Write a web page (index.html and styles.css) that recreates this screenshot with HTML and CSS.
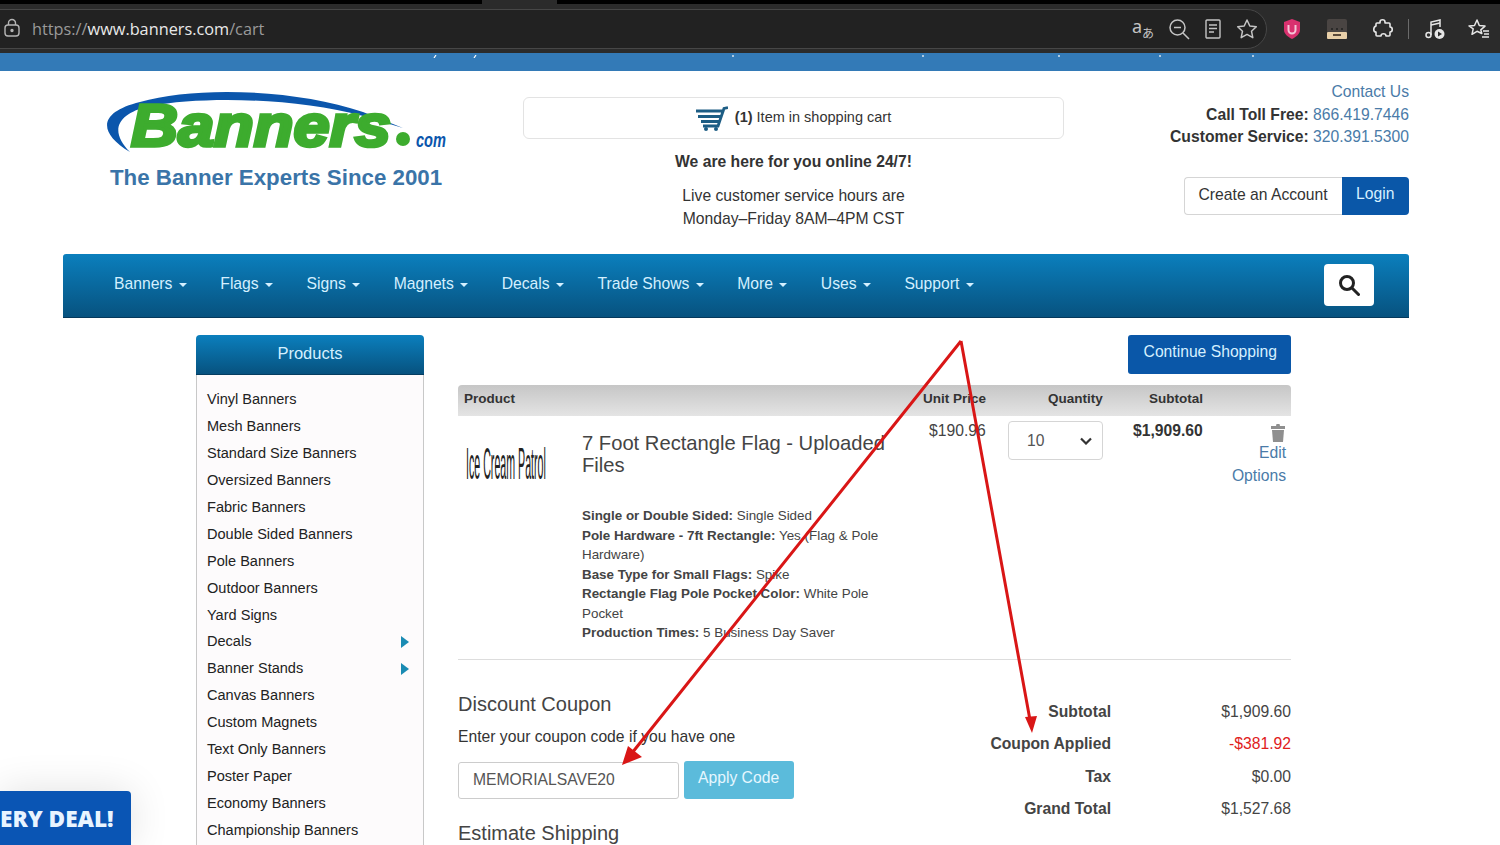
FILE: index.html
```html
<!DOCTYPE html>
<html lang="en">

<head>
  <meta charset="UTF-8" />
  <title>Banners.com - Cart</title>
  <link rel="stylesheet" href="styles.css">
</head>

<body>
  <div class="browserBar">
    <div class="addressBox">
      <svg class="lockIcon" width="18" height="20" viewBox="0 0 18 20" fill="none" stroke="#b5b5b5" stroke-width="1.4">
        <rect x="2" y="7" width="14" height="11" rx="3" />
        <path d="M5.5 7V5a3.500 3.500 0 0 1 7 0v2" />
        <circle cx="9" cy="12.500" r="1" fill="#b5b5b5" />
      </svg>
      <div class="urlText"><span class="urlDim">https://</span><span class="urlHost">www.banners.com</span><span class="urlDim">/cart</span></div>
      <div class="addressIcons">
        <svg class="transIcon" width="24" height="32" viewBox="0 -4 24 32">
          <text x="1" y="16" class="transLatin">a</text>
          <text x="11" y="21" class="transKana">あ</text>
        </svg>
        <svg width="24" height="24" viewBox="0 0 24 24" fill="none" stroke="#c4c4c4" stroke-width="1.5">
          <circle cx="10.500" cy="10.500" r="7.500" />
          <path d="M7 10.500h7M16 16l6 6" />
        </svg>
        <svg width="20" height="24" viewBox="0 0 20 24" fill="none" stroke="#c4c4c4" stroke-width="1.4">
          <rect x="3" y="3" width="14" height="18" rx="1" />
          <path d="M6 8h8M6 11.500h8M6 15h5" />
        </svg>
        <svg width="24" height="24" viewBox="0 0 24 24" fill="none" stroke="#c4c4c4" stroke-width="1.5">
          <path d="M12 3l2.800 6 6.500.8-4.800 4.400 1.300 6.500-5.800-3.300-5.800 3.300 1.300-6.500-4.800-4.400 6.500-.8z" stroke-linejoin="round" />
        </svg>
      </div>
    </div>
    <div class="toolIcons">
      <svg width="20" height="22" viewBox="0 0 20 22">
        <path d="M10 1l8 3v8c0 4-4 7-8 9-4-2-8-5-8-9V4z" fill="#d9316f" />
        <path d="M6.500 7v5a3.500 3.500 0 0 0 7 0V7" fill="none" stroke="#f5c6d8" stroke-width="2" />
      </svg>
      <svg width="22" height="22" viewBox="0 0 22 22">
        <rect x="1" y="1" width="20" height="14" rx="2" fill="#4a4543" />
        <rect x="1" y="14" width="20" height="7" rx="1" fill="#e8cfa8" />
        <rect x="7" y="16" width="8" height="2" fill="#5b4a3a" />
        <path d="M5 11h2M10 11h2M15 11h2" stroke="#222" stroke-width="1.500" />
      </svg>
      <svg width="22" height="22" viewBox="0 0 22 22" fill="none" stroke="#e6e6e6" stroke-width="1.600" stroke-linejoin="round">
        <path d="M8 4c0-3 5-3 5 0v1h4a1 1 0 0 1 1 1v3c3 0 3 5 0 5v3a1 1 0 0 1-1 1h-3c0-3-5-3-5 0H5a1 1 0 0 1-1-1v-3c-3 0-3-5 0-6V6a1 1 0 0 1 1-1h3z" />
      </svg>
      <span class="toolDivider"></span>
      <svg width="22" height="22" viewBox="0 0 22 22" fill="none" stroke="#e6e6e6" stroke-width="1.500">
        <circle cx="4.500" cy="17" r="2.500" />
        <path d="M7 17V4l9-2v7" />
        <path d="M7 7l9-2" />
        <circle cx="15.500" cy="16" r="5" fill="#e6e6e6" stroke="none" />
        <path d="M14 13.500l4 2.500-4 2.500z" fill="#2b2b2b" stroke="none" />
      </svg>
      <svg class="favIcon" width="24" height="24" viewBox="0 0 24 24" fill="none" stroke="#e6e6e6" stroke-width="1.500" stroke-linejoin="round">
        <path d="M10 3l2.300 5.500 5.700.6-4.200 3.800 1 3.600-4.800-2.200-5 3 1.200-5.400L2 9l5.500-.5z" />
        <path d="M16 14h6M17 17h5M15 20h7" />
      </svg>
    </div>
  </div>
  <div class="promoStrip">
    <svg width="1500" height="3" viewBox="0 0 1500 3" stroke="#fff" stroke-width="1.200">
      <path d="M436 0l-2 3M476 0l-2 3M733 0v2M923 0v2M1059 0v2M1160 0v2M1253 0v2" />
    </svg>
  </div>

  <div class="page">
    <header class="siteHeader">
      <div class="logoBlock">
        <svg class="logo" width="360" height="78" viewBox="0 -6 360 78">
          <path d="M25 60C-8 40 -6 20 35 10C90 -6 190 -3 258 20L298 36L258 24C190 6 100 4 45 14C10 22 5 40 25 60Z" fill="#0b56ac" />
          <text class="logoWord" x="26" y="54" textLength="260" lengthAdjust="spacingAndGlyphs">Banners</text>
          <circle cx="298" cy="47" r="7" fill="#3dac2e" />
          <text class="logoCom" x="311" y="55" textLength="30" lengthAdjust="spacingAndGlyphs">com</text>
        </svg>
        <div class="tagline">The Banner Experts Since 2001</div>
      </div>

      <div class="headerMiddle">
        <div class="cartBox">
          <svg width="32" height="25" viewBox="0 0 32 25" fill="none" stroke="#1d5d84" stroke-width="2.800">
            <path d="M0 5h27M2 10.500h23M5 15.500h18M7 20h15L28 2.500l4-1" />
            <circle cx="10" cy="23" r="2" fill="#1d5d84" stroke="none" />
            <circle cx="20" cy="23" r="2" fill="#1d5d84" stroke="none" />
          </svg>
          <span class="cartText"><b>(1)</b> Item in shopping cart</span>
        </div>
        <p class="onlineNote">We are here for you online 24/7!</p>
        <p class="hoursNote">Live customer service hours are<br />Monday–Friday 8AM–4PM CST</p>
      </div>

      <div class="headerRight">
        <a class="plainLink">Contact Us</a>
        <div class="phoneLine"><b>Call Toll Free:</b> <a class="plainLink">866.419.7446</a></div>
        <div class="phoneLine"><b>Customer Service:</b> <a class="plainLink">320.391.5300</a></div>
        <div class="accountBtns">
          <a class="btnCreate">Create an Account</a>
          <a class="btnLogin">Login</a>
        </div>
      </div>
    </header>

    <nav class="mainNav">
      <a>Banners <i class="caret"></i></a>
      <a>Flags <i class="caret"></i></a>
      <a>Signs <i class="caret"></i></a>
      <a>Magnets <i class="caret"></i></a>
      <a>Decals <i class="caret"></i></a>
      <a>Trade Shows <i class="caret"></i></a>
      <a>More <i class="caret"></i></a>
      <a>Uses <i class="caret"></i></a>
      <a>Support <i class="caret"></i></a>
      <button class="searchBtn">
        <svg width="22" height="22" viewBox="0 0 22 22" fill="none" stroke="#222" stroke-width="3">
          <circle cx="9" cy="9" r="6.500" />
          <path d="M14 14l6.500 6.500" stroke-linecap="round" />
        </svg>
      </button>
    </nav>

    <main class="mainArea">
      <aside class="sidebar">
        <h4 class="sidebarTitle">Products</h4>
        <ul class="sideList">
          <li>Vinyl Banners</li>
          <li>Mesh Banners</li>
          <li>Standard Size Banners</li>
          <li>Oversized Banners</li>
          <li>Fabric Banners</li>
          <li>Double Sided Banners</li>
          <li>Pole Banners</li>
          <li>Outdoor Banners</li>
          <li>Yard Signs</li>
          <li class="hasSub">Decals</li>
          <li class="hasSub">Banner Stands</li>
          <li>Canvas Banners</li>
          <li>Custom Magnets</li>
          <li>Text Only Banners</li>
          <li>Poster Paper</li>
          <li>Economy Banners</li>
          <li>Championship Banners</li>
        </ul>
      </aside>

      <section class="cartArea">
        <div class="continueRow"><a class="btnContinue">Continue Shopping</a></div>

        <div class="cartRow cartHead">
          <div class="headProduct">Product</div>
          <div>Unit Price</div>
          <div class="headQty">Quantity</div>
          <div class="headSub">Subtotal</div>
          <div></div>
        </div>

        <div class="cartRow cartItem">
          <div class="itemInfo">
            <svg class="thumb" width="124" height="60" viewBox="0 0 124 60">
              <text transform="translate(8 46) scale(.242 1)">Ice Cream Patrol</text>
            </svg>
            <div class="itemText">
              <h3 class="itemName">7 Foot Rectangle Flag - Uploaded Files</h3>
              <div class="itemOpts">
                <b>Single or Double Sided:</b> Single Sided<br />
                <b>Pole Hardware - 7ft Rectangle:</b> Yes (Flag &amp; Pole Hardware)<br />
                <b>Base Type for Small Flags:</b> Spike<br />
                <b>Rectangle Flag Pole Pocket Color:</b> White Pole Pocket<br />
                <b>Production Times:</b> 5 Business Day Saver
              </div>
            </div>
          </div>
          <div class="unitPrice">$190.96</div>
          <div>
            <div class="qtyBox">10
              <svg width="12" height="8" viewBox="0 0 12 8" fill="none" stroke="#333" stroke-width="2.200">
                <path d="M1 1.500l5 5 5-5" />
              </svg>
            </div>
          </div>
          <div class="lineTotal">$1,909.60</div>
          <div class="itemActions">
            <svg width="16" height="19" viewBox="0 0 16 19" fill="#8f8f8f">
              <path d="M1 3h5l.500-2h3l.500 2h5v3H1z" />
              <path d="M2 7h12l-1 12H3z" />
            </svg>
            <a class="plainLink">Edit</a>
            <a class="plainLink">Options</a>
          </div>
        </div>

        <div class="cartLower">
          <div class="couponBox">
            <h3 class="lowerTitle">Discount Coupon</h3>
            <p class="couponHint">Enter your coupon code if you have one</p>
            <div class="couponForm">
              <div class="couponInput">MEMORIALSAVE20</div>
              <a class="btnApply">Apply Code</a>
            </div>
            <h3 class="lowerTitle shippingTitle">Estimate Shipping</h3>
          </div>
          <div class="totalsBox">
            <div class="totalLabel">Subtotal</div><div>$1,909.60</div>
            <div class="totalLabel">Coupon Applied</div><div class="discount">-$381.92</div>
            <div class="totalLabel">Tax</div><div>$0.00</div>
            <div class="totalLabel">Grand Total</div><div>$1,527.68</div>
          </div>
        </div>
      </section>
    </main>
  </div>

  <a class="dealTab">ERY DEAL!</a>

  <!-- red marks drawn over the screenshot -->
  <svg class="arrows" width="1500" height="845" viewBox="0 0 1500 845" fill="none" stroke="#d91616" stroke-width="3">
    <path d="M961 341L632 753M961 341L1030 720" />
    <path d="M622 765l6-19 14 11zM1032 733l-7-16 12-1z" fill="#d91616" stroke="none" />
  </svg>
</body>

</html>
```

FILE: styles.css
```css
html,
body {
  margin: 0;
  height: 100%;
  overflow: hidden;
}

body {
  font-family: "Liberation Sans", Arial, sans-serif;
  font-size: 15.700px;
  color: #333;
  background-color: #fff;
  display: flex;
  flex-direction: column;
}

a {
  text-decoration: none;
}

p,
h3,
h4,
ul {
  margin: 0;
  padding: 0;
}

/* browser chrome */
.browserBar {
  flex: none;
  box-sizing: border-box;
  height: 53px;
  padding: 5px 0 0;
  background: linear-gradient(to right, #000 482px, #2b2b2b 482px, #2b2b2b 557px, #000 557px) no-repeat top left / 100% 4px, #2b2b2b;
  display: flex;
  align-items: center;
}

.addressBox {
  box-sizing: border-box;
  width: 1270px;
  height: 40px;
  margin-left: -3px;
  padding: 0 7px 0 5px;
  border: 1px solid #474747;
  border-radius: 0 20px 20px 0;
  background-color: #222;
  display: flex;
  align-items: center;
}

.lockIcon {
  flex: none;
  margin-top: -2px;
}

.urlText {
  margin-left: 11px;
  margin-top: -1px;
  font-family: "Open Sans", sans-serif;
  font-size: 16.300px;
}

.urlDim {
  color: #9a9a9a;
}

.urlHost {
  color: #e9e9e9;
}

.addressIcons {
  margin-left: auto;
  margin-right: 0;
  display: flex;
  align-items: center;
  gap: 12px;
}

.transLatin {
  font-family: "Noto Sans", sans-serif;
  font-size: 18px;
  fill: #c4c4c4;
}

.transKana {
  font-family: "Noto Sans CJK JP", sans-serif;
  font-size: 12px;
  fill: #c4c4c4;
}

.toolIcons {
  margin-left: 15px;
  display: flex;
  align-items: center;
  gap: 24px;
}

.toolDivider {
  width: 1px;
  height: 20px;
  margin: 0 -9px 0 -10px;
  background-color: #6b6b6b;
}

.favIcon {
  margin-left: -3px;
}

.promoStrip {
  flex: none;
  height: 18px;
  background-color: #337ab7;
  line-height: 0;
}

/* header */
.page {
  flex: 1;
  min-height: 0;
  width: 1346px;
  margin-left: 63px;
  display: flex;
  flex-direction: column;
}

.siteHeader {
  flex: none;
  height: 183px;
  display: flex;
}

.logoBlock {
  width: 342px;
  margin-left: 42px;
  padding-top: 15px;
}

.logo {
  display: block;
}

.logoWord {
  font-family: "Liberation Sans", sans-serif;
  font-size: 60px;
  font-weight: bold;
  font-style: italic;
  fill: #3dac2e;
  stroke: #3dac2e;
  stroke-width: 3.500px;
}

.logoCom {
  font-size: 21px;
  font-weight: bold;
  font-style: italic;
  fill: #0b56ac;
}

.tagline {
  margin-top: 1px;
  margin-left: 5px;
  font-size: 22.300px;
  font-weight: bold;
  color: #3a74a8;
  white-space: nowrap;
}

.headerMiddle {
  width: 541px;
  margin-left: 76px;
  padding-top: 26px;
  text-align: center;
}

.cartBox {
  box-sizing: border-box;
  height: 42px;
  border: 1px solid #e3e3e3;
  border-radius: 6px;
  display: flex;
  justify-content: center;
  align-items: center;
  gap: 7px;
  font-size: 14.500px;
}

.cartText {
  margin-top: -2px;
}

.onlineNote {
  margin-top: 14px;
  font-weight: bold;
}

.hoursNote {
  margin-top: 14px;
  line-height: 22.500px;
}

.headerRight {
  margin-left: auto;
  padding-top: 10px;
  line-height: 22.500px;
  text-align: right;
}

.plainLink {
  color: #4a7ba8;
}

.phoneLine {
  white-space: nowrap;
}

.accountBtns {
  margin-top: 28px;
  display: flex;
  justify-content: flex-end;
}

.btnCreate {
  box-sizing: border-box;
  height: 38px;
  padding: 0 14px;
  border: 1px solid #d5d5d5;
  border-right: none;
  border-radius: 4px 0 0 4px;
  color: #333;
  line-height: 33px;
}

.btnLogin {
  box-sizing: border-box;
  height: 38px;
  padding: 0 14.500px;
  border-radius: 0 4px 4px 0;
  background-color: #0a57a8;
  color: #d6f0ff;
  line-height: 33px;
}

/* nav */
.mainNav {
  flex: none;
  box-sizing: border-box;
  height: 64px;
  padding: 0 35px 3px 51px;
  border-radius: 3px 3px 0 0;
  border-bottom: 1px solid #05395c;
  background: linear-gradient(#0b7fbd, #07527f);
  display: flex;
  align-items: center;
  gap: 33.500px;
}

.mainNav a {
  color: #d4f0ff;
  white-space: nowrap;
}

.caret {
  display: inline-block;
  margin-left: 2px;
  vertical-align: middle;
  border-top: 4px solid #d4f0ff;
  border-left: 4px solid transparent;
  border-right: 4px solid transparent;
}

.searchBtn {
  margin-left: auto;
  margin-top: 2px;
  width: 50px;
  height: 42px;
  padding: 0;
  border: none;
  border-radius: 4px;
  background-color: #fff;
  line-height: 0;
}

/* sidebar + cart */
.mainArea {
  flex: 1;
  min-height: 0;
  overflow: hidden;
  width: 1095px;
  margin-left: 133px;
  padding-top: 17px;
  display: flex;
  gap: 34px;
}

.sidebar {
  flex: none;
  width: 228px;
}

.sidebarTitle {
  box-sizing: border-box;
  height: 40px;
  border-radius: 4px 4px 0 0;
  background: linear-gradient(#0b7fbd, #07527f);
  border-bottom: 1px solid #053d61;
  color: #d4f0ff;
  font-size: 16.500px;
  font-weight: normal;
  line-height: 37px;
  text-align: center;
}

.sideList {
  list-style: none;
  box-sizing: border-box;
  height: 600px;
  padding: 11px 10px 0;
  border-left: 1px solid #c8c8c8;
  border-right: 1px solid #c8c8c8;
  background-color: #fdfbfc;
}

.sideList li {
  height: 26.950px;
  font-size: 14.550px;
  line-height: 26.950px;
  color: #222;
  display: flex;
  justify-content: space-between;
  align-items: center;
}

.hasSub::after {
  content: "";
  margin-right: 4px;
  border-left: 8px solid #1a8bb3;
  border-top: 6px solid transparent;
  border-bottom: 6px solid transparent;
}

.cartArea {
  flex: 1;
  min-width: 0;
}

.continueRow {
  display: flex;
  justify-content: flex-end;
}

.btnContinue {
  box-sizing: border-box;
  height: 39px;
  padding: 0 14px 0 16px;
  border-radius: 3px;
  background-color: #0a57a8;
  color: #d6f0ff;
  line-height: 34px;
  white-space: nowrap;
}

.cartRow {
  display: grid;
  grid-template-columns: 465px 85px 125px 98px 1fr;
}

.cartHead {
  box-sizing: border-box;
  height: 31px;
  margin-top: 11px;
  padding-bottom: 4px;
  border-radius: 4px 4px 0 0;
  background: linear-gradient(#c6c6c6, #e4e4e4);
  align-items: center;
  font-size: 13.500px;
  font-weight: bold;
}

.headProduct {
  padding-left: 6px;
}

.headQty {
  padding-left: 40px;
}

.headSub {
  padding-left: 16px;
}

.cartItem {
  height: 244px;
  padding-top: 5px;
  box-sizing: border-box;
  border-bottom: 1px solid #ddd;
}

.itemInfo {
  display: flex;
}

.thumb {
  flex: none;
  display: block;
  margin-top: 12px;
}

.thumb text {
  font-family: "Liberation Sans", sans-serif;
  font-size: 44px;
  fill: #222;
}

.itemText {
  flex: 1;
  min-width: 0;
}

.itemName {
  font-size: 20.200px;
  font-weight: normal;
  line-height: 22px;
  color: #444;
  margin-top: 11px;
}

.itemOpts {
  margin-top: 30px;
  width: 305px;
  font-size: 13.400px;
  line-height: 19.500px;
  color: #444;
}

.unitPrice {
  padding-top: 1px;
  padding-left: 6px;
  color: #444;
}

.qtyBox {
  box-sizing: border-box;
  width: 95px;
  height: 39px;
  padding: 0 10px 0 18px;
  border: 1px solid #d5d5d5;
  border-radius: 4px;
  display: flex;
  justify-content: space-between;
  align-items: center;
  color: #555;
}

.lineTotal {
  padding-top: 1px;
  font-weight: bold;
}

.itemActions {
  padding-top: 2px;
  padding-right: 5px;
  text-align: right;
  display: flex;
  flex-direction: column;
  align-items: flex-end;
  line-height: 22.500px;
}

.cartLower {
  display: flex;
  justify-content: space-between;
}

.couponBox {
  padding-top: 32px;
}

.lowerTitle {
  font-size: 20px;
  font-weight: normal;
  line-height: 24px;
  color: #444;
}

.couponHint {
  margin-top: 10px;
  line-height: 22px;
}

.couponForm {
  margin-top: 13px;
  display: flex;
  gap: 5px;
  align-items: center;
}

.couponInput {
  box-sizing: border-box;
  width: 221px;
  height: 37px;
  padding-left: 14px;
  border: 1px solid #ccc;
  border-radius: 3px;
  line-height: 34px;
  color: #555;
}

.btnApply {
  box-sizing: border-box;
  height: 38px;
  padding: 0 15px 0 14px;
  border-radius: 3px;
  background-color: #5bbbdb;
  color: #e6f7ff;
  line-height: 33px;
}

.shippingTitle {
  margin-top: 22px;
}

.totalsBox {
  padding-top: 42.500px;
  display: grid;
  grid-template-columns: 153px 180px;
  grid-auto-rows: 32.500px;
  width: 333px;
  text-align: right;
  color: #444;
}

.totalLabel {
  font-weight: bold;
}

.discount {
  color: #e0201c;
}

/* floating bits */
.dealTab {
  position: absolute;
  left: 0;
  top: 791px;
  width: 131px;
  height: 54px;
  box-sizing: border-box;
  padding-right: 18px;
  border-radius: 0 4px 0 0;
  background-color: #0a55b4;
  color: #e8f4ff;
  font-family: "Open Sans", sans-serif;
  font-size: 22.600px;
  font-weight: 800;
  line-height: 56px;
  text-align: right;
  white-space: nowrap;
  overflow: hidden;
  box-shadow: 0 0 40px rgba(0, 0, 0, .12);
}

.arrows {
  position: absolute;
  left: 0;
  top: 0;
  pointer-events: none;
}
```
